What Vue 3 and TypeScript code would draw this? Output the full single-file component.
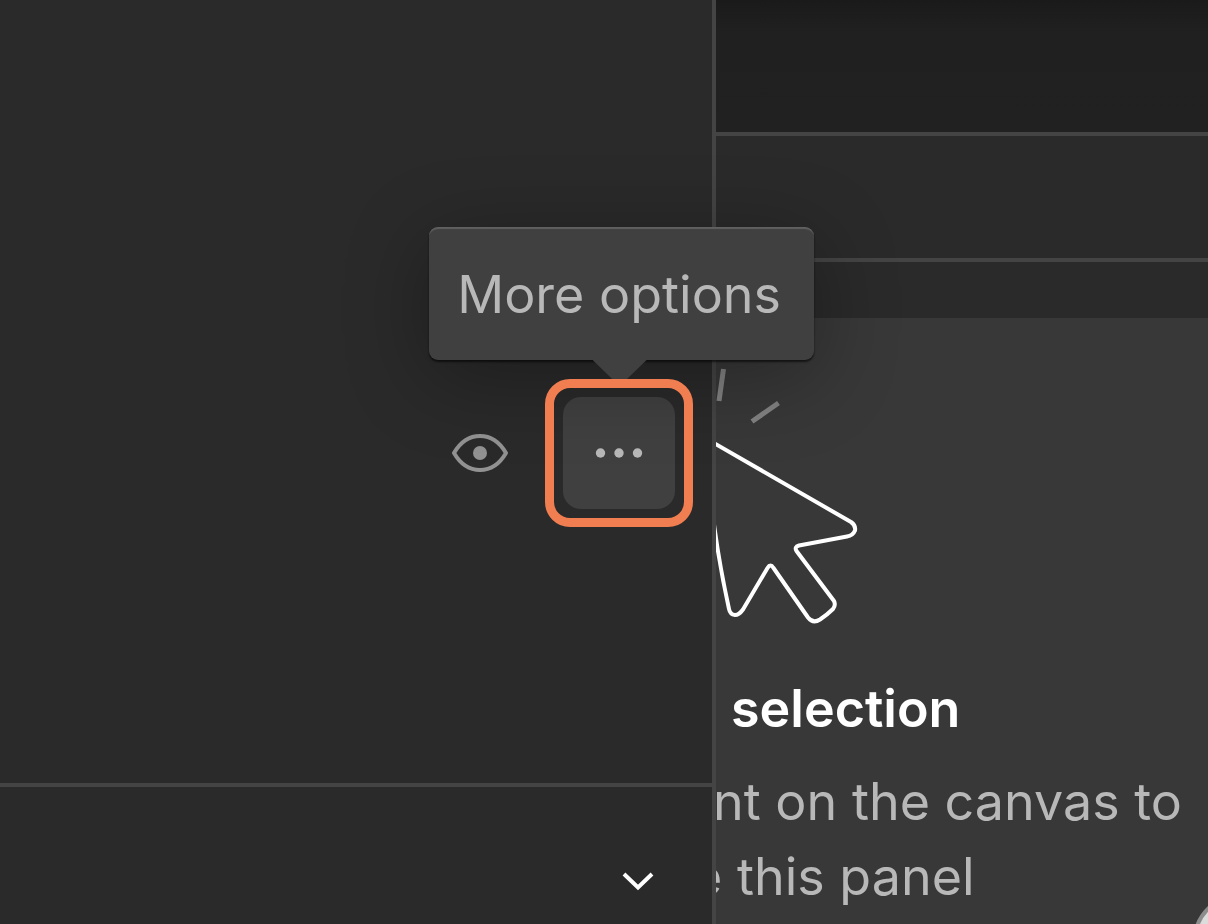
<script setup lang="ts">
import { ref } from 'vue'

const expanded = ref<boolean>(false)
const previewing = ref<boolean>(false)
const bodyLines: { key: string; text: string }[] = [
  { key: 'first', text: 'nt on the canvas to' },
  { key: 'second', text: 'e this panel' },
]
</script>

<template>
  <main class="workspace">
    <section class="side">
      <div class="side-main">
        <div class="actions">
          <button class="icon-button" type="button" aria-label="Preview" :aria-pressed="previewing" @click="previewing = !previewing">
            <svg class="eye" viewBox="0 0 56 40" aria-hidden="true">
              <path d="M2 20C9 8 17 3 28 3S47 8 54 20C47 32 39 37 28 37S9 32 2 20Z" />
              <circle cx="28" cy="20" r="7" />
            </svg>
          </button>
          <div class="highlight">
            <button class="icon-button more" type="button" aria-describedby="more-tip" aria-label="More options">
              <svg class="dots" viewBox="0 0 48 12" aria-hidden="true">
                <circle cx="5.500" cy="6" r="4.700" />
                <circle cx="24" cy="6" r="4.700" />
                <circle cx="42.500" cy="6" r="4.700" />
              </svg>
            </button>
            <div id="more-tip" class="tooltip" role="tooltip">More options</div>
          </div>
        </div>
      </div>
      <div class="side-footer">
        <button class="toggle" type="button" aria-label="Toggle section" :aria-expanded="expanded" @click="expanded = !expanded">
          <svg class="chevron" viewBox="0 0 32 20" aria-hidden="true">
            <path d="M2 3L16 16.500L30 3" />
          </svg>
        </button>
      </div>
    </section>

    <section class="inspector">
      <div class="bar bar-top"></div>
      <div class="bar bar-tabs"></div>
      <div class="bar-gap"></div>
      <div class="empty">
        <svg class="pointer" viewBox="716 366 160 264" aria-hidden="true">
          <path class="ray" d="M723.500 369L719 401M778.500 403L752 421.500" />
          <path
            class="arrow"
            d="M706 438.500L851 522Q856 525.500 855 530.500Q853 535.500 847 536.500L799 545.500Q794 547 796.500 551L834 601Q836 605 833 609Q828 614 820 619.500Q813 624 808 617.500L773.500 568Q770.500 563 767.500 568L743 609.500Q739 615 735 615Q730 614.500 729 609Q720 568 714.500 528L710 495"
          />
        </svg>
        <h2 class="title">selection</h2>
        <p class="body">
          <span v-for="line in bodyLines" :key="line.key" :class="['line', line.key]">{{ line.text }}</span>
        </p>
      </div>
      <button class="help" type="button" aria-label="Help"></button>
    </section>
  </main>
</template>

<style>
body {
  margin: 0;
  background: #2a2a2a;
}
</style>

<style scoped>
.workspace {
  display: grid;
  grid-template-columns: 179fr 123fr;
  min-height: 100vh;
  overflow: hidden;
  background: #2a2a2a;
  color: #b8b8b8;
  font-family: Inter, "Liberation Sans", sans-serif;
  font-size: 52px;
}

button {
  padding: 0;
  border: 0;
  background: none;
  cursor: pointer;
}

svg {
  display: block;
}

.side {
  position: relative;
  z-index: 1;
  display: flex;
  flex-direction: column;
  border-right: 4px solid #444;
}

.side-main {
  padding: 379px 19px 256px;
  border-bottom: 4px solid #444;
}

.actions {
  display: flex;
  align-items: center;
  justify-content: flex-end;
  gap: 9px;
}

.icon-button {
  display: grid;
  place-items: center;
  width: 112px;
  height: 112px;
  border-radius: 18px;
}

.eye {
  width: 56px;
  height: 40px;
}

.eye path {
  fill: none;
  stroke: #929292;
  stroke-width: 4;
  stroke-linejoin: round;
}

.eye circle {
  fill: #929292;
}

.highlight {
  position: relative;
  padding: 18px;
}

.highlight::after {
  content: "";
  position: absolute;
  z-index: 3;
  inset: 0;
  border: 9px solid #f07e50;
  border-radius: 25px;
  pointer-events: none;
}

.more {
  background: #404040;
}

.dots {
  width: 48px;
  height: 12px;
}

.dots circle {
  fill: #b8b8b8;
}

.tooltip {
  position: absolute;
  z-index: 2;
  right: -121px;
  bottom: 167px;
  box-sizing: border-box;
  padding: 34px 33px 31px 28px;
  border-radius: 9px;
  background: #404040;
  box-shadow: inset 0 3px 1px -1px #606060, 0 2px 2px rgba(0, 0, 0, 0.6), 0 16px 84px rgba(0, 0, 0, 0.32);
  line-height: 68px;
  white-space: nowrap;
}

.tooltip::after {
  content: "";
  position: absolute;
  top: 100%;
  left: 50%;
  width: 54px;
  height: 26px;
  margin-left: -29px;
  background: #404040;
  clip-path: polygon(0 0, 100% 0, 58% 85%, 42% 85%);
}

.side-footer {
  display: flex;
  flex: 1;
  align-items: flex-start;
  justify-content: flex-end;
  padding: 64px 46px 0;
}

.toggle {
  display: grid;
  place-items: center;
  width: 56px;
  height: 60px;
}

.chevron {
  width: 32px;
  height: 20px;
}

.chevron path {
  fill: none;
  stroke: #fff;
  stroke-width: 4;
}

.inspector {
  position: relative;
  display: flex;
  flex-direction: column;
  min-width: 0;
  overflow: hidden;
}

.bar {
  border-bottom: 4px solid #444;
}

.bar-top {
  height: 132px;
  background: linear-gradient(#1a1a1a, #202020 32px, #212121);
}

.bar-tabs {
  height: 122px;
}

.bar-gap {
  height: 56px;
}

.empty {
  flex: 1;
  padding-top: 48px;
  background: #383838;
}

.pointer {
  width: 160px;
  height: 264px;
}

.pointer path {
  fill: none;
}

.pointer .ray {
  stroke: #828282;
  stroke-width: 5;
}

.pointer .arrow {
  stroke: #fff;
  stroke-width: 4;
  stroke-linejoin: round;
}

.title {
  margin: 45px 0 0 15px;
  color: #fff;
  font-size: 52px;
  font-weight: 600;
  line-height: 68px;
}

.body {
  margin: 21px 0 0;
  line-height: 75px;
}

.line {
  display: block;
  white-space: nowrap;
}

.first {
  margin-left: -3px;
}

.second {
  margin-left: -24px;
}

.help {
  position: absolute;
  right: -77px;
  bottom: -62px;
  width: 92px;
  height: 92px;
  border: 4px solid #8c8c8c;
  border-radius: 50%;
  background: #dcdcdc;
}
</style>
